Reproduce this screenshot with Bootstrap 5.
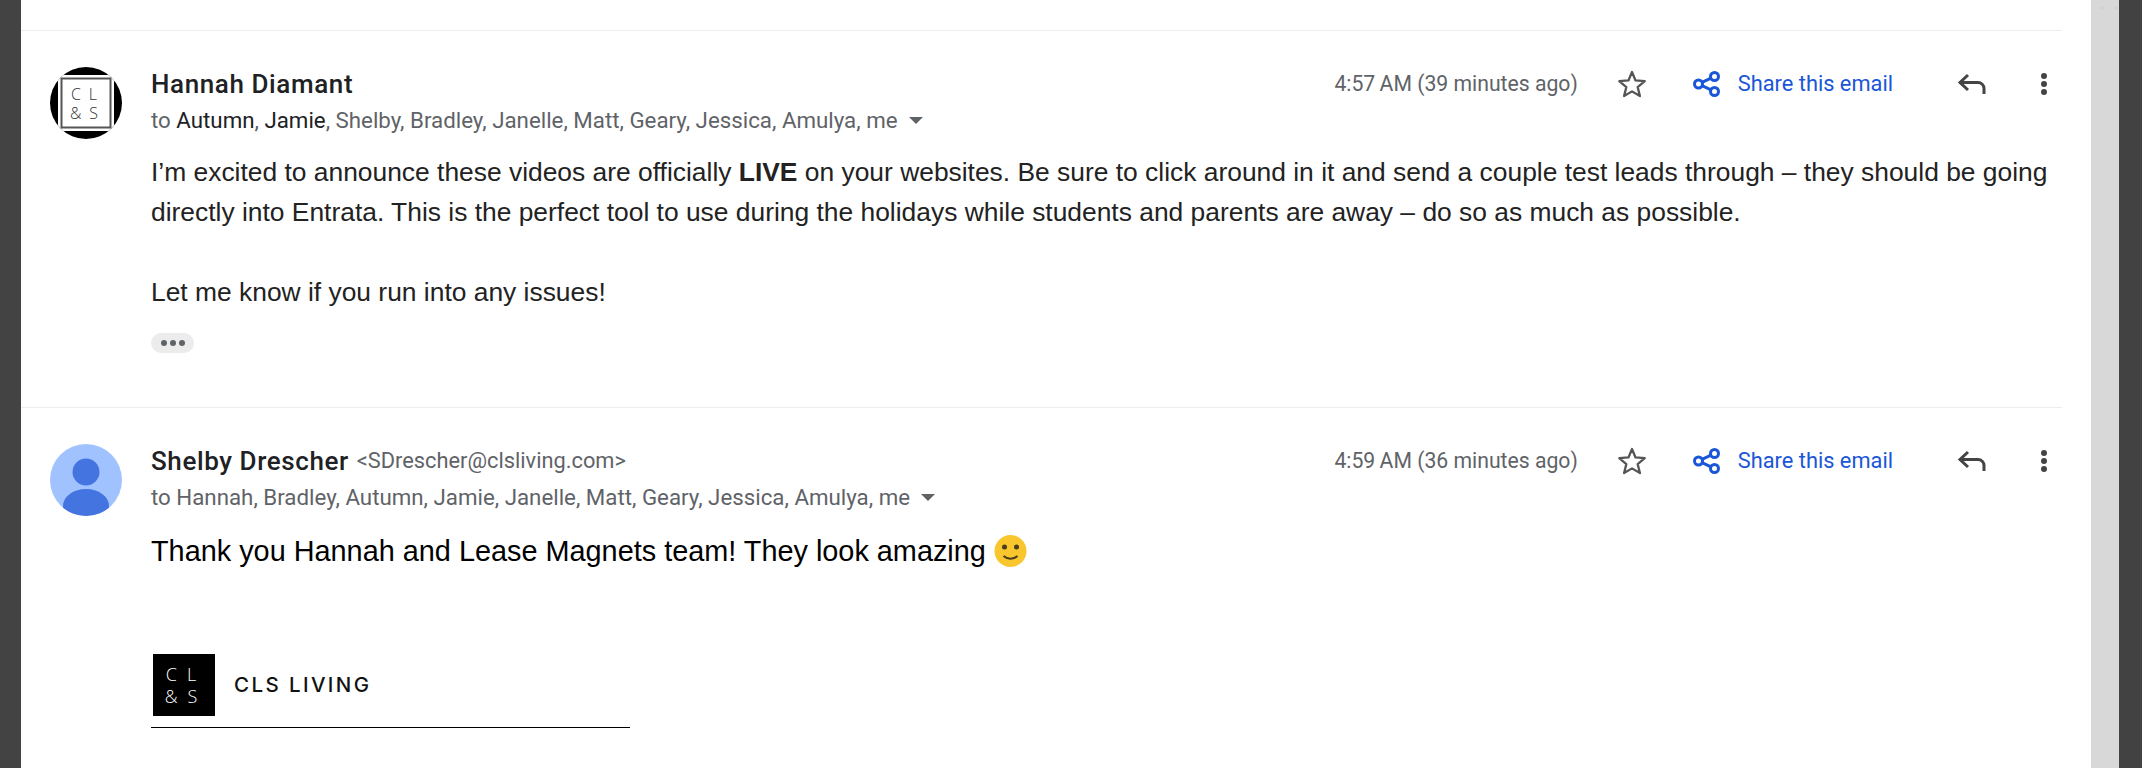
<!DOCTYPE html>
<html lang="en">
<head>
  <meta charset="UTF-8" />
  <title>Gmail thread</title>
  <link href="https://cdn.jsdelivr.net/npm/bootstrap@5.3.0/dist/css/bootstrap.min.css" rel="stylesheet">
  <style>
    html, body { height: 768px; overflow: hidden; background: #fff; }
    .side-left { width: 21px; background: #434343; }
    .side-track { width: 28px; background-color: #d8d8d8; background-image: radial-gradient(circle, #cdcdcd 1px, transparent 1.2px); background-size: 14px 12px; background-repeat: repeat-x; background-position: 4px 2px; }
    .side-right { width: 23px; background: #424242; }
    .mail-pane { width: 2070px; padding-top: 30px; }
    .mail-list { width: 2041px; }
    .mail-msg { border-top: 1px solid #eeeeee; padding: 36px 0 0 29px; gap: 29px; }
    .msg-first { height: 377px; }
    .avatar-box { width: 72px; height: 72px; }
    .msg-head { height: 34px; }
    .sender { font: 500 26px/34px Roboto, sans-serif; color: #202124; letter-spacing: .6px; }
    .sender-mail { font: 400 21.8px/34px Roboto, sans-serif; color: #5f6368; margin-left: 8px; }
    .recipients { font: 400 22.3px/34px Roboto, sans-serif; color: #5f6368; margin-top: 2px; }
    .recipients b { font-weight: 400; color: #202124; }
    .caret-down { width: 0; height: 0; border: 7px solid transparent; border-top: 7px solid #5f6368; border-bottom: 0; margin-left: 11px; }
    .stamp { font: 400 21.2px/34px Roboto, sans-serif; color: #5f6368; white-space: nowrap; }
    .share-link { font: 400 21.8px/34px Roboto, sans-serif; color: #1a56d8; text-decoration: none; }
    .msg-text { font: 400 26.4px/40px "Liberation Sans", Arial, sans-serif; color: #222; margin-top: 15px; }
    .msg-text-big { font-size: 28.85px; color: #000; margin-top: 17px; }
    .more-pill { width: 43px; height: 20px; background: #ececec; border-radius: 10px; margin-top: 21px; gap: 3px; }
    .more-pill i { width: 6px; height: 6px; border-radius: 50%; background: #5f6368; }
    .sig-logo { margin: 83px 0 0 2px; gap: 19px; }
    .sig-mark { width: 62px; height: 62px; background: #000; }
    .sig-name { font: 500 20.5px/1 Inter, sans-serif; letter-spacing: 2.4px; color: #111; }
    .sig-rule { width: 479px; height: 1px; background: #000; margin-top: 11px; }
    .ico-star { margin-left: 37px; }
    .ico-share { margin-left: 43px; margin-right: 16px; }
    .ico-reply { margin-left: 64px; }
    .ico-more { margin-left: 54px; margin-right: 15px; }
  </style>
</head>
<body>
  <div class="d-flex">
    <div class="side-left flex-shrink-0 vh-100"></div>
    <div class="mail-pane flex-shrink-0">
      <div class="mail-list">

        <div class="mail-msg msg-first d-flex">
          <svg class="avatar-box flex-shrink-0" viewBox="0 0 72 72">
            <defs><clipPath id="roundA"><circle cx="36" cy="36" r="36"/></clipPath></defs>
            <circle cx="36" cy="36" r="36" fill="#000"/>
            <rect x="8" y="8" width="56" height="56" fill="#fff" clip-path="url(#roundA)"/>
            <rect x="11.500" y="11.500" width="49" height="49" fill="#fff" stroke="#555" stroke-width="2"/>
            <text x="38" y="33" text-anchor="middle" font-family="Open Sans, sans-serif" font-size="16" font-weight="300" letter-spacing="8" fill="#333">CL</text>
            <text x="38" y="52" text-anchor="middle" font-family="Open Sans, sans-serif" font-size="16" font-weight="300" letter-spacing="8" fill="#333">&amp;S</text>
          </svg>
          <div class="flex-grow-1">
            <div class="msg-head d-flex align-items-center">
              <span class="sender me-auto">Hannah Diamant</span>
              <span class="stamp">4:57&#8201;AM (39 minutes ago)</span>
              <svg class="ico-star" width="34" height="34" viewBox="0 0 24 24"><path d="M12 3.500l2.500 6 6.500.5-5 4.200 1.600 6.300L12 17.200 6.400 20.500 8 14.200 3 10l6.500-.5z" fill="none" stroke="#555" stroke-width="1.600" stroke-linejoin="round"/></svg>
              <svg class="ico-share" width="30" height="30" viewBox="0 0 30 30"><g fill="none" stroke="#1a56d8" stroke-width="3"><circle cx="6.500" cy="15" r="4"/><circle cx="22.500" cy="7.500" r="4"/><circle cx="22.500" cy="22.500" r="4"/><path d="M10 13.300l9-4.200M10 16.700l9 4.200"/></g></svg>
              <a class="share-link" href="#">Share this email</a>
              <svg class="ico-reply" width="30" height="24" viewBox="0 0 30 24"><path d="M11 3L3 10.500l8 7.500M3 10.500h18a6 6 0 0 1 6 6V22" fill="none" stroke="#444" stroke-width="3"/></svg>
              <svg class="ico-more" width="6" height="24" viewBox="0 0 6 24"><circle cx="3" cy="4" r="3" fill="#444"/><circle cx="3" cy="12" r="3" fill="#444"/><circle cx="3" cy="20" r="3" fill="#444"/></svg>
            </div>
            <div class="recipients d-flex align-items-center">
              <span>to <b>Autumn</b>, <b>Jamie</b>, Shelby, Bradley, Janelle, Matt, Geary, Jessica, Amulya, me</span>
              <span class="caret-down"></span>
            </div>
            <div class="msg-text">
              I’m excited to announce these videos are officially <strong>LIVE</strong> on your websites. Be sure to click around in it and send a couple test leads through – they should be going<br>
              directly into Entrata. This is the perfect tool to use during the holidays while students and parents are away – do so as much as possible.<br><br>
              Let me know if you run into any issues!
            </div>
            <div class="more-pill d-flex align-items-center justify-content-center"><i></i><i></i><i></i></div>
          </div>
        </div>

        <div class="mail-msg d-flex">
          <svg class="avatar-box flex-shrink-0" viewBox="0 0 72 72">
            <defs><clipPath id="roundB"><circle cx="36" cy="36" r="36"/></clipPath></defs>
            <circle cx="36" cy="36" r="36" fill="#a0c3ff"/>
            <g clip-path="url(#roundB)" fill="#4374e0">
              <circle cx="36" cy="28" r="13.500"/>
              <ellipse cx="36" cy="62" rx="23" ry="17"/>
            </g>
          </svg>
          <div class="flex-grow-1">
            <div class="msg-head d-flex align-items-center">
              <span class="sender">Shelby Drescher</span>
              <span class="sender-mail me-auto">&lt;SDrescher@clsliving.com&gt;</span>
              <span class="stamp">4:59&#8201;AM (36 minutes ago)</span>
              <svg class="ico-star" width="34" height="34" viewBox="0 0 24 24"><path d="M12 3.500l2.500 6 6.500.5-5 4.200 1.600 6.300L12 17.200 6.400 20.500 8 14.200 3 10l6.500-.5z" fill="none" stroke="#555" stroke-width="1.600" stroke-linejoin="round"/></svg>
              <svg class="ico-share" width="30" height="30" viewBox="0 0 30 30"><g fill="none" stroke="#1a56d8" stroke-width="3"><circle cx="6.500" cy="15" r="4"/><circle cx="22.500" cy="7.500" r="4"/><circle cx="22.500" cy="22.500" r="4"/><path d="M10 13.300l9-4.200M10 16.700l9 4.200"/></g></svg>
              <a class="share-link" href="#">Share this email</a>
              <svg class="ico-reply" width="30" height="24" viewBox="0 0 30 24"><path d="M11 3L3 10.500l8 7.500M3 10.500h18a6 6 0 0 1 6 6V22" fill="none" stroke="#444" stroke-width="3"/></svg>
              <svg class="ico-more" width="6" height="24" viewBox="0 0 6 24"><circle cx="3" cy="4" r="3" fill="#444"/><circle cx="3" cy="12" r="3" fill="#444"/><circle cx="3" cy="20" r="3" fill="#444"/></svg>
            </div>
            <div class="recipients d-flex align-items-center">
              <span>to Hannah, Bradley, Autumn, Jamie, Janelle, Matt, Geary, Jessica, Amulya, me</span>
              <span class="caret-down"></span>
            </div>
            <div class="msg-text msg-text-big d-flex align-items-center gap-2">
              <span>Thank you Hannah and Lease Magnets team! They look amazing</span>
              <svg width="33" height="32" viewBox="0 0 32 32"><circle cx="16" cy="16" r="16" fill="#f9c62e"/><circle cx="10" cy="12" r="2.500" fill="#4a3b1c"/><circle cx="22" cy="12" r="2.500" fill="#4a3b1c"/><path d="M9 21c4 3.500 10 3.500 14 0" fill="none" stroke="#4a3b1c" stroke-width="2"/></svg>
            </div>
            <div class="sig-logo d-flex align-items-center">
              <svg class="sig-mark" viewBox="0 0 62 62">
                <text x="33" y="27" text-anchor="middle" font-family="Open Sans, sans-serif" font-size="18" font-weight="300" letter-spacing="10" fill="#fff">CL</text>
                <text x="33" y="49" text-anchor="middle" font-family="Open Sans, sans-serif" font-size="18" font-weight="300" letter-spacing="10" fill="#fff">&amp;S</text>
              </svg>
              <span class="sig-name">CLS LIVING</span>
            </div>
            <div class="sig-rule"></div>
          </div>
        </div>

      </div>
    </div>
    <div class="side-track flex-shrink-0 vh-100"></div>
    <div class="side-right flex-shrink-0 vh-100"></div>
  </div>
</body>
</html>
